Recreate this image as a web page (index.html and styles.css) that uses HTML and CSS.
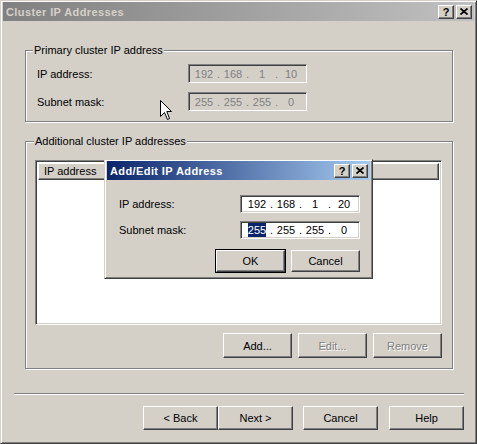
FILE: index.html
```html
<!DOCTYPE html>
<html lang="en">
<head>
  <meta charset="UTF-8" />
  <title>Cluster IP Addresses</title>
  <link rel="stylesheet" href="styles.css">
</head>
<body>
  <div class="window">
    <!-- Wizard caption (inactive, the child dialog has focus) -->
    <div class="caption inactive">
      <span class="caption-text">Cluster IP Addresses</span>
      <span class="caption-btn help">?</span>
      <span class="caption-btn close">
        <svg width="8" height="7" viewBox="0 0 8 7"><path d="M0.5 0.5L7.5 6.5M7.5 0.5L0.5 6.5" stroke="#000" stroke-width="1.7"/></svg>
      </span>
    </div>

    <div class="page">
      <fieldset class="group group-primary">
        <legend>Primary cluster IP address</legend>
        <div class="row">
          <label>IP address:</label>
          <div class="ipfield disabled">
            <span class="oct">192</span><span class="dot">.</span><span class="oct">168</span><span class="dot">.</span><span class="oct">1</span><span class="dot">.</span><span class="oct">10</span>
          </div>
        </div>
        <div class="row">
          <label>Subnet mask:</label>
          <div class="ipfield disabled">
            <span class="oct">255</span><span class="dot">.</span><span class="oct">255</span><span class="dot">.</span><span class="oct">255</span><span class="dot">.</span><span class="oct">0</span>
          </div>
        </div>
      </fieldset>

      <fieldset class="group group-extra">
        <legend>Additional cluster IP addresses</legend>
        <div class="listview">
          <div class="lv-header">
            <div class="lv-col">IP address</div>
            <div class="lv-fill"></div>
          </div>
        </div>
        <div class="btnrow">
          <button class="btn">Add...</button>
          <button class="btn" disabled>Edit...</button>
          <button class="btn" disabled>Remove</button>
        </div>
      </fieldset>
    </div>

    <div class="separator"></div>

    <div class="nav">
      <button class="btn wide">&lt; Back</button>
      <button class="btn wide">Next &gt;</button>
      <button class="btn wide cancel">Cancel</button>
      <button class="btn wide helpbtn">Help</button>
    </div>

    <!-- Modal Add/Edit dialog -->
    <div class="dialog">
      <div class="caption active">
        <span class="caption-text">Add/Edit IP Address</span>
        <span class="caption-btn help">?</span>
        <span class="caption-btn close">
          <svg width="8" height="7" viewBox="0 0 8 7"><path d="M0.5 0.5L7.5 6.5M7.5 0.5L0.5 6.5" stroke="#000" stroke-width="1.7"/></svg>
        </span>
      </div>
      <div class="dialog-body">
        <div class="drow">
          <label>IP address:</label>
          <div class="ipfield">
            <span class="oct">192</span><span class="dot">.</span><span class="oct">168</span><span class="dot">.</span><span class="oct">1</span><span class="dot">.</span><span class="oct">20</span>
          </div>
        </div>
        <div class="drow">
          <label>Subnet mask:</label>
          <div class="ipfield">
            <span class="oct"><span class="sel">255</span></span><span class="dot">.</span><span class="oct">255</span><span class="dot">.</span><span class="oct">255</span><span class="dot">.</span><span class="oct">0</span>
          </div>
        </div>
        <div class="dbtns">
          <button class="btn default">OK</button>
          <button class="btn">Cancel</button>
        </div>
      </div>
    </div>

    <svg class="pointer" width="13" height="21" viewBox="0 0 13 21">
      <path d="M0.5 0.5V16.5L4.5 12.5L7.5 19.5L9.5 18.5L6.8 11.5H11.5Z" fill="#fff" stroke="#000" stroke-width="1" stroke-linejoin="miter"/>
    </svg>
  </div>
</body>
</html>
```

FILE: styles.css
```css
* {
  box-sizing: border-box;
}
body {
  margin: 0;
  font-family: "Liberation Sans", Arial, sans-serif;
  font-size: 11px;
  color: #000;
  background: #d4d0c8;
}
.window {
  position: relative;
  width: 477px;
  height: 444px;
  background: #d4d0c8;
  border: 1px solid;
  border-color: #d4d0c8 #404040 #404040 #d4d0c8;
  box-shadow: inset 1px 1px #fff, inset -1px -1px #808080;
  padding: 1px 2px 2px 2px;
}

/* title bars */
.caption {
  display: flex;
  align-items: center;
  height: 19px;
  padding: 0 2px 0 2px;
}
.caption.inactive {
  background: linear-gradient(to right, #808080, #c0c0c0);
  color: #d4d0c8;
}
.caption.active {
  background: linear-gradient(to right, #0a246a, #a6caf0);
  color: #fff;
}
.caption-text {
  flex: 1;
  font-weight: bold;
  letter-spacing: 0.4px;
  padding-left: 1px;
}
.caption-btn {
  width: 16px;
  height: 14px;
  display: flex;
  align-items: center;
  justify-content: center;
  background: #d4d0c8;
  color: #000;
  font-weight: bold;
  font-size: 11px;
  border: 1px solid;
  border-color: #fff #404040 #404040 #fff;
  box-shadow: inset -1px -1px #808080;
}
.caption-btn.help {
  margin-right: 2px;
}

/* group boxes */
.page {
  padding: 23px 21px 0 22px;
}
.group {
  margin: 0;
  border: 1px solid #808080;
  box-shadow: inset 1px 1px #fff, 1px 1px #fff;
}
.group legend {
  line-height: 13px;
  padding: 0 1px;
  background: #d4d0c8;
}
.group-primary {
  padding: 7px 10px 10px 11px;
}
.group-primary legend {
  margin-left: -4px;
}
.group-extra {
  margin-top: 13px;
  padding: 12px 10px 10px 9px;
}
.group-extra legend {
  margin-left: -1px;
}
.row {
  display: flex;
  align-items: center;
  height: 19px;
}
.row + .row {
  margin-top: 9px;
}
.row label {
  width: 151px;
}

/* IP address edit control */
.ipfield {
  display: flex;
  align-items: center;
  width: 119px;
  height: 19px;
  padding-left: 3px;
  background: #fff;
  border: 1px solid;
  border-color: #808080 #fff #fff #808080;
  box-shadow: inset 1px 1px #404040, inset -1px -1px #d4d0c8;
}
.ipfield.disabled {
  background: #d4d0c8;
  color: #808080;
}
.oct {
  width: 24px;
  text-align: center;
}
.dot {
  width: 5px;
  text-align: center;
}
.sel {
  background: #0a246a;
  color: #fff;
  padding: 1px 0;
}

/* list view */
.listview {
  height: 165px;
  background: #fff;
  border: 1px solid;
  border-color: #808080 #fff #fff #808080;
  box-shadow: inset 1px 1px #404040, inset -1px -1px #d4d0c8;
  padding: 2px;
}
.lv-header {
  display: flex;
  height: 17px;
}
.lv-col,
.lv-fill {
  background: #d4d0c8;
  border: 1px solid;
  border-color: #fff #404040 #404040 #fff;
  box-shadow: inset -1px -1px #808080;
  line-height: 15px;
}
.lv-col {
  width: 68px;
  padding-left: 5px;
}
.lv-fill {
  flex: 1;
}

/* push buttons */
.btn {
  font-family: inherit;
  font-size: 11px;
  color: #000;
  background: #d4d0c8;
  border: 1px solid;
  border-color: #fff #404040 #404040 #fff;
  box-shadow: inset -1px -1px #808080;
  padding: 0;
  margin: 0;
}
.btn:disabled {
  color: #808080;
  text-shadow: 1px 1px #fff;
}
.btn.default {
  outline: 1px solid #000;
  outline-offset: 0;
}
.btnrow {
  display: flex;
  justify-content: flex-end;
  gap: 6px;
  margin-top: 8px;
}
.btnrow .btn {
  width: 69px;
  height: 25px;
}

/* wizard footer */
.separator {
  margin: 24px 10px 0 11px;
  height: 2px;
  border-top: 1px solid #808080;
  border-bottom: 1px solid #fff;
}
.nav {
  display: flex;
  justify-content: flex-end;
  margin: 11px 10px 0 0;
}
.btn.wide {
  width: 75px;
  height: 24px;
}
.nav .cancel {
  margin-left: 10px;
}
.nav .helpbtn {
  margin-left: 11px;
}

/* child dialog */
.dialog {
  position: absolute;
  left: 103px;
  top: 158px;
  width: 269px;
  height: 120px;
  background: #d4d0c8;
  border: 1px solid;
  border-color: #d4d0c8 #404040 #404040 #d4d0c8;
  box-shadow: inset 1px 1px #fff, inset -1px -1px #808080;
  padding: 1px 2px 2px 2px;
}
.dialog-body {
  padding: 15px 10px 0 12px;
}
.drow {
  display: flex;
  align-items: center;
  height: 18px;
}
.drow + .drow {
  margin-top: 8px;
}
.drow label {
  width: 121px;
}
.drow .ipfield {
  width: 120px;
  height: 18px;
  padding-left: 4px;
}
.dbtns {
  display: flex;
  justify-content: flex-end;
  gap: 6px;
  margin-top: 11px;
}
.dbtns .btn {
  width: 69px;
  height: 22px;
}

.pointer {
  position: absolute;
  left: 159px;
  top: 99px;
}
```
